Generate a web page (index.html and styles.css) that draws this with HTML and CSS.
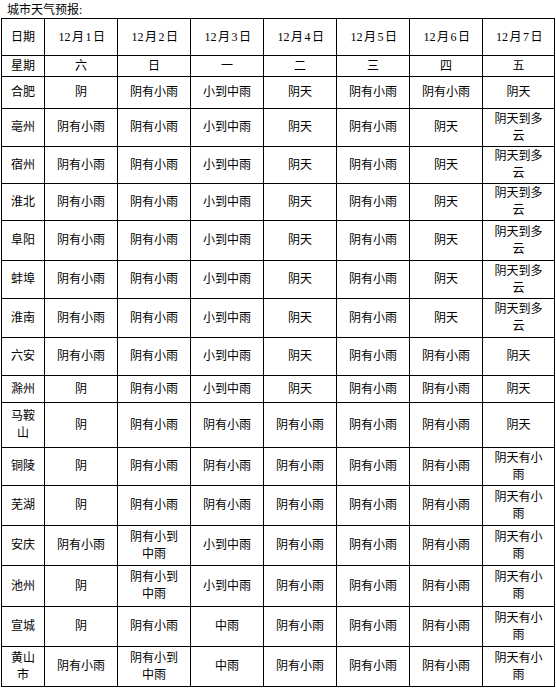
FILE: index.html
```html
<!DOCTYPE html>
<html lang="zh-CN">
<head>
<meta charset="utf-8">
<title>城市天气预报</title>
<link rel="stylesheet" href="styles.css">
</head>
<body>
<p class="title">城市天气预报:</p>
<table class="forecast">
<colgroup>
<col class="c-city">
<col class="c-day"><col class="c-day"><col class="c-day"><col class="c-day"><col class="c-day"><col class="c-day"><col class="c-last">
</colgroup>
<tbody>
<tr><td>日期</td><td><span class="n">12</span>月<span class="n">1</span>日</td><td><span class="n">12</span>月<span class="n">2</span>日</td><td><span class="n">12</span>月<span class="n">3</span>日</td><td><span class="n">12</span>月<span class="n">4</span>日</td><td><span class="n">12</span>月<span class="n">5</span>日</td><td><span class="n">12</span>月<span class="n">6</span>日</td><td><span class="n">12</span>月<span class="n">7</span>日</td></tr>
<tr><td>星期</td><td>六</td><td>日</td><td>一</td><td>二</td><td>三</td><td>四</td><td>五</td></tr>
<tr><td>合肥</td><td>阴</td><td>阴有小雨</td><td>小到中雨</td><td>阴天</td><td>阴有小雨</td><td>阴有小雨</td><td>阴天</td></tr>
<tr><td>亳州</td><td>阴有小雨</td><td>阴有小雨</td><td>小到中雨</td><td>阴天</td><td>阴有小雨</td><td>阴天</td><td>阴天到多云</td></tr>
<tr><td>宿州</td><td>阴有小雨</td><td>阴有小雨</td><td>小到中雨</td><td>阴天</td><td>阴有小雨</td><td>阴天</td><td>阴天到多云</td></tr>
<tr><td>淮北</td><td>阴有小雨</td><td>阴有小雨</td><td>小到中雨</td><td>阴天</td><td>阴有小雨</td><td>阴天</td><td>阴天到多云</td></tr>
<tr><td>阜阳</td><td>阴有小雨</td><td>阴有小雨</td><td>小到中雨</td><td>阴天</td><td>阴有小雨</td><td>阴天</td><td>阴天到多云</td></tr>
<tr><td>蚌埠</td><td>阴有小雨</td><td>阴有小雨</td><td>小到中雨</td><td>阴天</td><td>阴有小雨</td><td>阴天</td><td>阴天到多云</td></tr>
<tr><td>淮南</td><td>阴有小雨</td><td>阴有小雨</td><td>小到中雨</td><td>阴天</td><td>阴有小雨</td><td>阴天</td><td>阴天到多云</td></tr>
<tr><td>六安</td><td>阴有小雨</td><td>阴有小雨</td><td>小到中雨</td><td>阴天</td><td>阴有小雨</td><td>阴有小雨</td><td>阴天</td></tr>
<tr><td>滁州</td><td>阴</td><td>阴有小雨</td><td>小到中雨</td><td>阴天</td><td>阴有小雨</td><td>阴有小雨</td><td>阴天</td></tr>
<tr><td>马鞍山</td><td>阴</td><td>阴有小雨</td><td>阴有小雨</td><td>阴有小雨</td><td>阴有小雨</td><td>阴有小雨</td><td>阴天</td></tr>
<tr><td>铜陵</td><td>阴</td><td>阴有小雨</td><td>阴有小雨</td><td>阴有小雨</td><td>阴有小雨</td><td>阴有小雨</td><td>阴天有小雨</td></tr>
<tr><td>芜湖</td><td>阴</td><td>阴有小雨</td><td>阴有小雨</td><td>阴有小雨</td><td>阴有小雨</td><td>阴有小雨</td><td>阴天有小雨</td></tr>
<tr><td>安庆</td><td>阴有小雨</td><td>阴有小到中雨</td><td>小到中雨</td><td>阴有小雨</td><td>阴有小雨</td><td>阴有小雨</td><td>阴天有小雨</td></tr>
<tr><td>池州</td><td>阴</td><td>阴有小到中雨</td><td>小到中雨</td><td>阴有小雨</td><td>阴有小雨</td><td>阴有小雨</td><td>阴天有小雨</td></tr>
<tr><td>宣城</td><td>阴</td><td>阴有小雨</td><td>中雨</td><td>阴有小雨</td><td>阴有小雨</td><td>阴有小雨</td><td>阴天有小雨</td></tr>
<tr><td>黄山市</td><td>阴有小雨</td><td>阴有小到中雨</td><td>中雨</td><td>阴有小雨</td><td>阴有小雨</td><td>阴有小雨</td><td>阴天有小雨</td></tr>
</tbody>
</table>
</body>
</html>
```
FILE: styles.css
```css
html, body {
  margin: 0;
  padding: 0;
  background: #fff;
  color: #000;
}
body {
  font-family: "Liberation Serif", "Noto Sans CJK SC", sans-serif;
  font-size: 12px;
}
.title {
  margin: 0;
  padding: 1px 0 0 7px;
  height: 17px;
  line-height: 18px;
}
.forecast {
  margin-left: 1px;
  border-collapse: collapse;
  table-layout: fixed;
  width: 554px;
}
.c-city { width: 43px; }
.c-day { width: 73px; }
.c-last { width: 72px; }
.forecast td {
  border: 1px solid #000;
  padding: 0 7px;
  text-align: center;
  vertical-align: middle;
  line-height: 17px;
}
.n { margin: 0 1.5px; }
.forecast tr:nth-child(1) td { height: 36px; }
.forecast tr:nth-child(2) td { height: 20px; }
.forecast tr:nth-child(3) td { height: 31px; }
.forecast tr:nth-child(4) td { height: 37px; }
.forecast tr:nth-child(5) td { height: 36px; }
.forecast tr:nth-child(6) td { height: 36px; }
.forecast tr:nth-child(7) td { height: 39px; }
.forecast tr:nth-child(8) td { height: 37px; }
.forecast tr:nth-child(9) td { height: 38px; }
.forecast tr:nth-child(10) td { height: 37px; }
.forecast tr:nth-child(11) td { height: 26px; }
.forecast tr:nth-child(12) td { height: 44px; }
.forecast tr:nth-child(13) td { height: 37px; }
.forecast tr:nth-child(14) td { height: 39px; }
.forecast tr:nth-child(15) td { height: 39px; }
.forecast tr:nth-child(16) td { height: 40px; }
.forecast tr:nth-child(17) td { height: 39px; }
.forecast tr:nth-child(18) td { height: 39px; }
```
